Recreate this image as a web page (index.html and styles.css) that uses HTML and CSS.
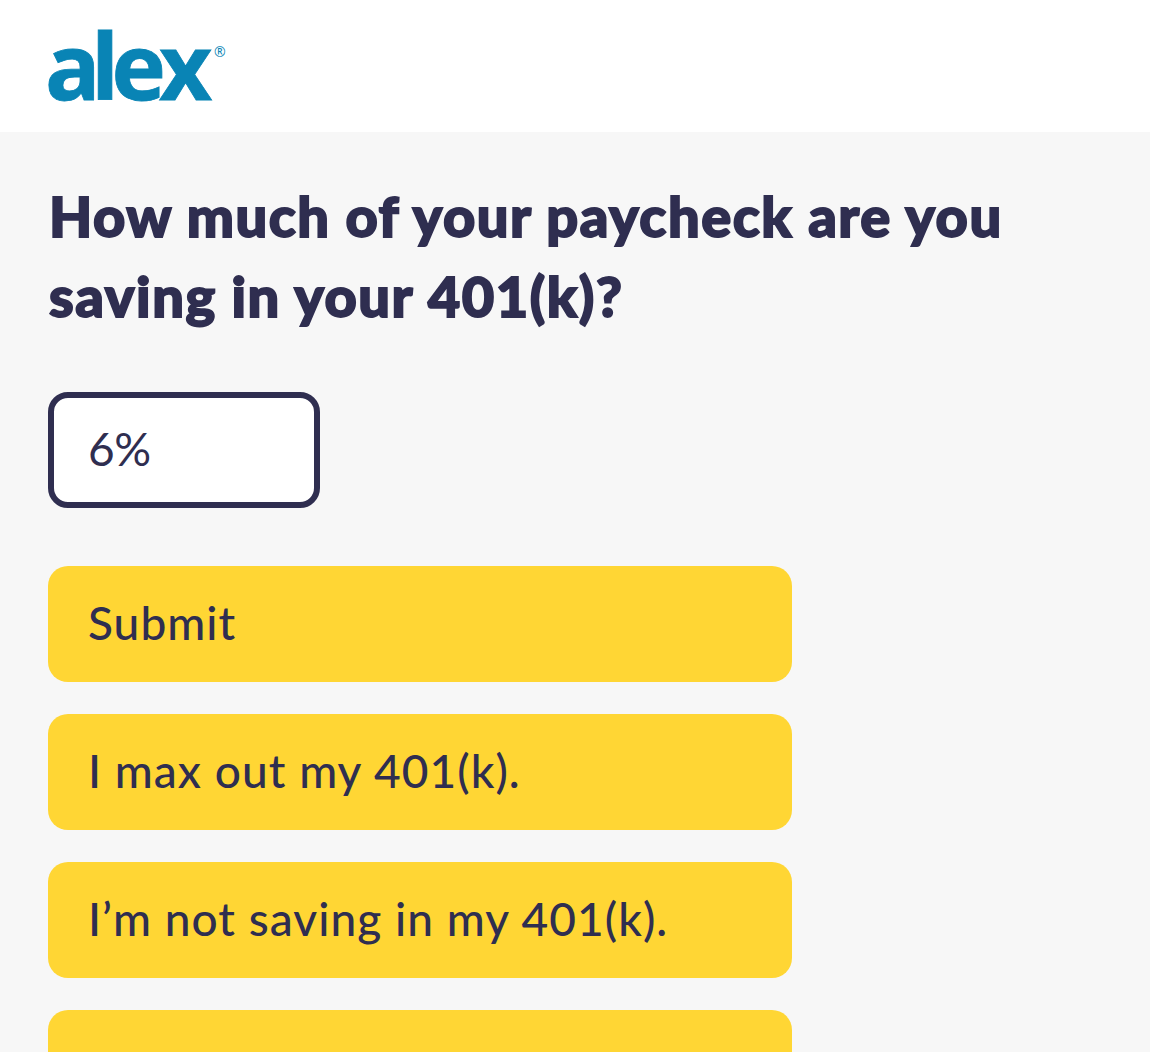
FILE: index.html
```html
<!DOCTYPE html>
<html lang="en">
<head>
  <meta charset="UTF-8" />
  <meta name="viewport" content="width=device-width, initial-scale=1.0"/>
  <title>ALEX</title>
  <link rel="stylesheet" href="styles.css">
</head>
<body>
  <header class="header">
    <svg class="logo" width="228" height="132" viewBox="0 0 228 132" role="img" aria-label="alex">
      <text class="logo-text" x="45 91 111.5 159" y="100">alex</text>
      <text class="logo-mark" x="214" y="57">®</text>
    </svg>
  </header>

  <main class="question">
    <h1>How much of your paycheck are you saving in your 401(k)?</h1>

    <input type="text" class="answer-input" value="6%" aria-label="Paycheck percentage">

    <div class="answers">
      <button class="answer-btn">Submit</button>
      <button class="answer-btn">I max out my 401(k).</button>
      <button class="answer-btn">I’m not saving in my 401(k).</button>
      <button class="answer-btn" aria-label="More"></button>
    </div>
  </main>
</body>
</html>
```
FILE: styles.css
```css
* {
  box-sizing: border-box;
  margin: 0;
  padding: 0;
}

body {
  display: flex;
  flex-direction: column;
  font-family: Lato, "Open Sans", sans-serif;
  background: #f7f7f7;
  color: #2f2e50;
  height: 100vh;
}

.header {
  height: 132px;
  background: #fff;
  flex-shrink: 0;
}

.logo {
  display: block;
  fill: #0984b5;
  overflow: visible;
}

.logo-text {
  font: 700 92px "Open Sans", sans-serif;
  stroke: #0984b5;
  stroke-width: 0.8px;
}

.logo-mark {
  font: 14px "Open Sans", sans-serif;
}

.question {
  flex: 1;
  min-height: 0;
  padding: 44px 48px 0;
  overflow: hidden;
}

h1 {
  max-width: 1000px;
  padding-left: 1px;
  font-size: 56px;
  font-weight: 900;
  line-height: 80px;
  letter-spacing: 1.5px;
  -webkit-text-stroke: 1.8px #2f2e50;
}

.answer-input {
  display: block;
  width: 272px;
  height: 116px;
  margin-top: 56px;
  padding: 0 34px 4px;
  border: 6px solid #2f2e50;
  border-radius: 20px;
  background: #fff;
  font: 46px Lato, sans-serif;
  letter-spacing: -0.5px;
  color: #2f2e50;
  outline: none;
}

.answers {
  display: flex;
  flex-direction: column;
  gap: 32px;
  width: 744px;
  margin-top: 58px;
}

.answer-btn {
  height: 116px;
  flex-shrink: 0;
  padding: 0 40px 4px;
  border: none;
  border-radius: 20px;
  background: #ffd634;
  font: 500 46px Lato, sans-serif;
  letter-spacing: 1.05px;
  color: #2f2e50;
  text-align: left;
  cursor: pointer;
}
```
